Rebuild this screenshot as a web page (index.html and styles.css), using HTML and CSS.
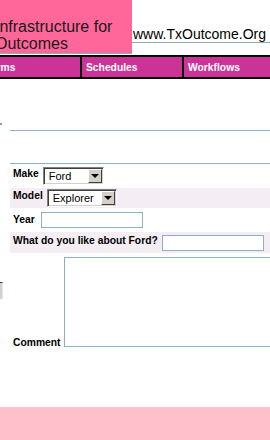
FILE: index.html
```html
<!DOCTYPE html>
<html lang="en">
  <head>
    <meta charset="UTF-8" />
    <meta name="viewport" content="width=device-width, initial-scale=1.0" />
    <title>TxOutcome Forms</title>
    <link rel="stylesheet" href="styles.css">
  </head>
  <body>
    <div class="page">
      <header class="top">
        <div class="brand">
          <div class="brand-text">Infrastructure for<br>Outcomes</div>
        </div>
        <div class="site">www.TxOutcome.Org</div>
      </header>

      <nav class="tabs">
        <a class="tab tab-first" href="#">Forms</a>
        <a class="tab" href="#">Schedules</a>
        <a class="tab" href="#">Workflows</a>
      </nav>

      <div class="layout">
        <aside class="side">
          <div class="side-dash"></div>
          <div class="side-pick"></div>
        </aside>

        <main class="content">
          <hr class="rule">
          <hr class="rule rule-second">

          <div class="row row-make">
            <span class="label">Make</span>
            <div class="pick pick-make">
              <span class="pick-text">Ford</span>
              <span class="pick-btn"></span>
            </div>
          </div>
          <div class="row row-model">
            <span class="label">Model</span>
            <div class="pick pick-model">
              <span class="pick-text">Explorer</span>
              <span class="pick-btn"></span>
            </div>
          </div>
          <div class="row row-year">
            <span class="label label-year">Year</span>
            <input class="field field-year" type="text">
          </div>
          <div class="row row-like">
            <span class="label">What do you like about Ford?</span>
            <input class="field" type="text">
          </div>
          <div class="row row-comment">
            <span class="label label-comment">Comment</span>
            <textarea class="comment"></textarea>
          </div>
        </main>
      </div>

      <footer class="foot"></footer>
    </div>
  </body>
</html>
```

FILE: styles.css
```css
body {
  margin: 0;
  padding: 0;
  background-color: #fff;
  color: #000;
  font-family: "Liberation Sans", Arial, sans-serif;
  overflow: hidden;
}
.page {
  display: flex;
  flex-direction: column;
  height: 440px;
  overflow: hidden;
}

/* header */
.top {
  display: flex;
  align-items: flex-start;
}
.brand {
  flex: none;
  width: 132px;
  height: 35px;
  padding: 18px 0 0;
  background-color: #ff6699;
  border-bottom: 1px solid #8faabb;
  overflow: hidden;
  font-size: 16px;
  line-height: 17px;
  color: #1a1a1a;
}
.brand-text {
  margin-left: -5px;
  white-space: nowrap;
}
.site {
  flex: 1;
  margin-top: 26px;
  padding-left: 1px;
  font-size: 14px;
  line-height: 16px;
  white-space: nowrap;
  border-bottom: 1px solid #8faabb;
}

/* nav */
.tabs {
  display: flex;
  height: 20px;
  margin-top: 1px;
  background-color: #cc3399;
  border-top: 2px solid #000;
  border-bottom: 2px solid #000;
  overflow: hidden;
}
.tab {
  flex: none;
  box-sizing: border-box;
  width: 102px;
  height: 20px;
  padding: 1px 4px 0;
  border-right: 2px solid #000;
  color: #fff;
  font-size: 10.3px;
  font-weight: bold;
  line-height: 20px;
  text-decoration: none;
  white-space: nowrap;
}
.tab-first {
  margin-left: -20px;
}

/* body */
.layout {
  display: flex;
}
.side {
  flex: none;
  width: 10px;
}
.side-dash {
  width: 2px;
  height: 2px;
  margin-top: 44px;
  background-color: #999;
}
.side-pick {
  width: 2px;
  height: 16px;
  margin-top: 157px;
  background-color: #d4d0c8;
  border-top: 1px solid #404040;
  border-right: 1px solid #e8e4f0;
}
.content {
  flex: none;
  width: 300px;
}
.rule {
  height: 0;
  margin: 51px 0 0;
  border: 0;
  border-top: 1px solid #8fb0c4;
}
.rule-second {
  margin-top: 32px;
}

.row {
  display: flex;
  align-items: center;
  gap: 4px;
  padding-left: 3px;
}
.row-make {
  height: 24px;
}
.row-model {
  height: 20px;
  background-color: #f4eef4;
}
.row-year {
  height: 24px;
}
.row-like {
  height: 21px;
  background-color: #f4eef4;
}
.row-comment {
  align-items: flex-end;
  padding-top: 4px;
}
.label {
  margin-bottom: 4px;
  font-size: 10.3px;
  font-weight: bold;
  line-height: 12px;
  white-space: nowrap;
}
.label-year {
  margin-bottom: 0;
  margin-right: 2px;
}
.label-comment {
  margin-bottom: -2px;
}

/* select look */
.pick {
  display: flex;
  box-sizing: border-box;
  height: 18px;
  background-color: #fff;
  border: 1px solid;
  border-color: #808080 #fff #fff #808080;
  box-shadow: inset 1px 1px #404040, inset -1px -1px #d4d0c8;
}
.pick-make {
  width: 61px;
}
.pick-model {
  width: 70px;
}
.pick-text {
  flex: 1;
  padding: 2px 0 0 5px;
  font-size: 11px;
  line-height: 13px;
}
.pick-btn {
  display: flex;
  align-items: center;
  justify-content: center;
  box-sizing: border-box;
  width: 14px;
  margin: 1px 1px 1px 0;
  background-color: #d4d0c8;
  border: 1px solid;
  border-color: #fff #404040 #404040 #fff;
}
.pick-btn::after {
  content: "";
  border-left: 4px solid transparent;
  border-right: 4px solid transparent;
  border-top: 4px solid #000;
}

.field {
  box-sizing: border-box;
  width: 102px;
  height: 16px;
  margin: 0;
  padding: 0;
  border: 1px solid #8fb0c4;
  background-color: #fff;
}
.comment {
  box-sizing: border-box;
  width: 220px;
  height: 90px;
  margin: 0;
  padding: 0;
  border: 1px solid #8fb0c4;
  resize: none;
}

.foot {
  flex: none;
  height: 33px;
  margin-top: auto;
  background-color: #ffc0cb;
}
```
